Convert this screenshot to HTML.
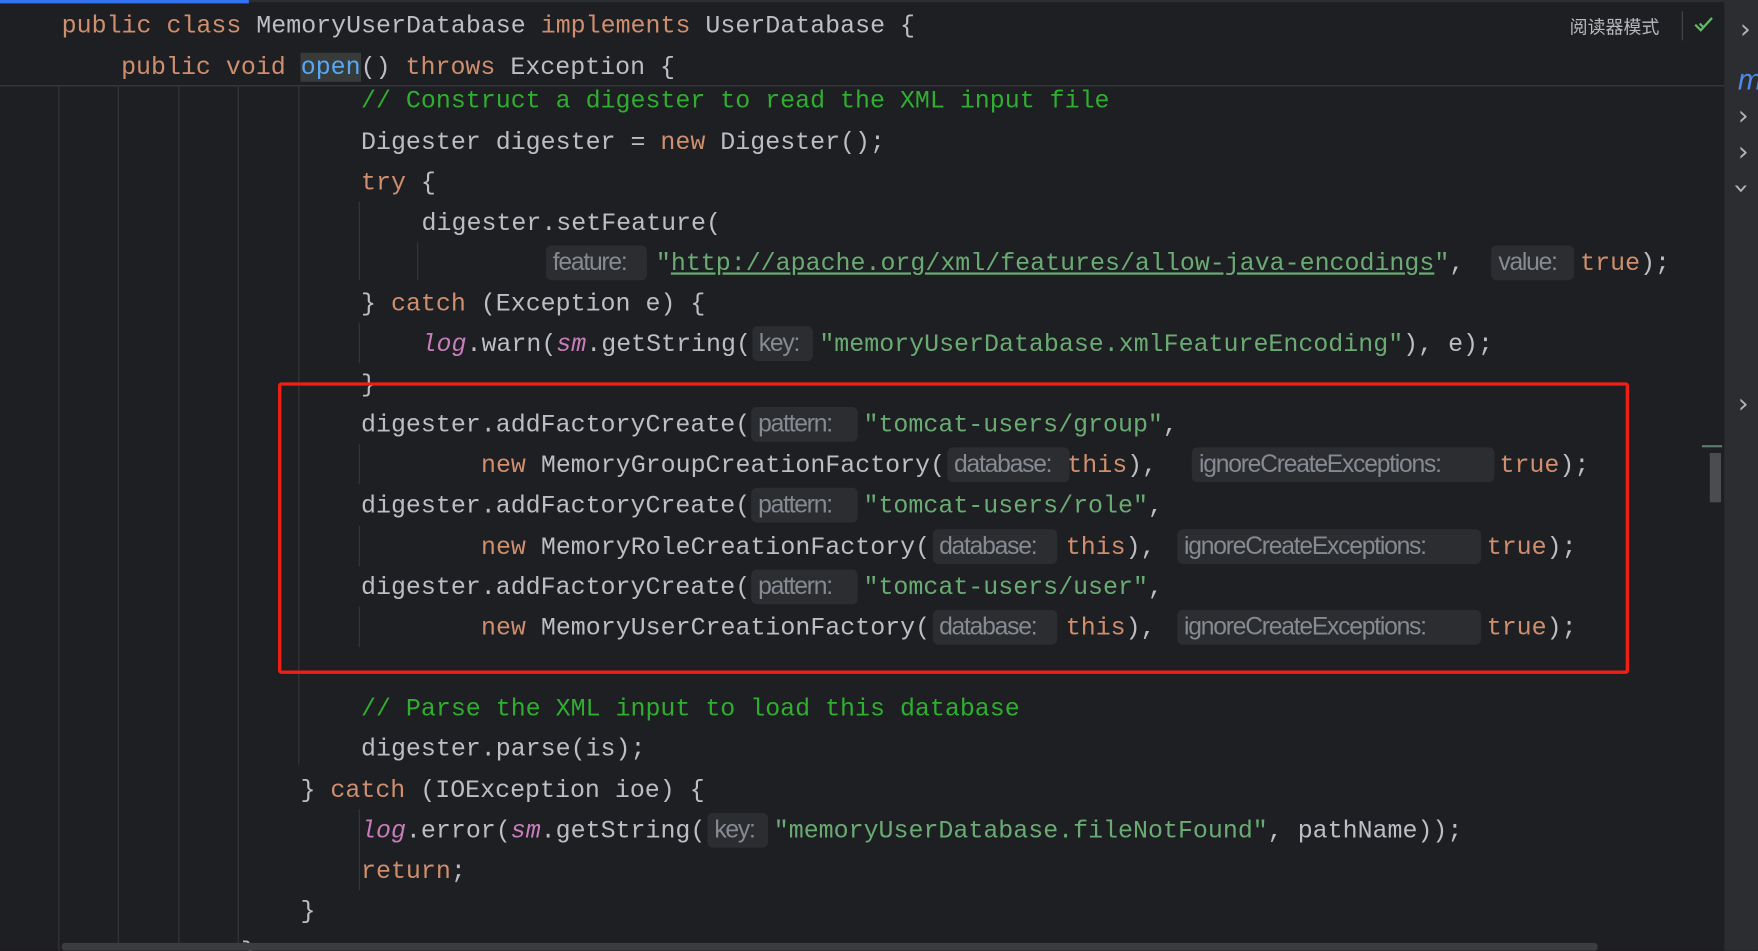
<!DOCTYPE html>
<html><head><meta charset="utf-8"><style>
html,body{margin:0;padding:0;background:#1e1f22;overflow:hidden;width:1758px;height:951px}
#w{position:absolute;left:0;top:0;width:1568px;height:848px;transform:scale(1.12117);transform-origin:0 0;background:#1e1f22;overflow:hidden}
.l{position:absolute;height:36px;line-height:36px;white-space:pre;font-family:"Liberation Mono",monospace;font-size:22.25px;color:#bcbec4}
.k{color:#cf8e6d}.c{color:#2fae2f}.s{color:#6aab73}.i{color:#c77dbb;font-style:italic}
.u{text-decoration:underline;text-decoration-color:#6aab73}
.h{display:inline-block;box-sizing:border-box;height:31px;line-height:30px;vertical-align:top;margin-top:2px;background:#2b2d30;color:#868a91;border-radius:5px;font-family:"Liberation Sans",sans-serif;font-size:22px;letter-spacing:-1.1px;padding-left:6px;overflow:hidden}
.g{position:absolute;width:1px;background:#35373b}
.chev{position:absolute;color:#b0b3b8;font-family:"DejaVu Sans",sans-serif;font-size:24px;line-height:24px}
</style></head><body><div id="w">
<div style="position:absolute;left:0;top:0;width:222px;height:3px;background:#3574f0"></div>
<div style="position:absolute;left:222px;top:0;width:1316px;height:2px;background:#2b2d30"></div>
<div style="position:absolute;left:0;top:76px;width:1538px;height:1px;background:#3c3e42"></div>
<div class="g" style="left:52px;top:77px;height:771px"></div>
<div class="g" style="left:105px;top:77px;height:771px"></div>
<div class="g" style="left:159px;top:77px;height:771px"></div>
<div class="g" style="left:212px;top:77px;height:771px"></div>
<div class="g" style="left:266px;top:77px;height:605px"></div>
<div class="g" style="left:320px;top:180px;height:70px"></div>
<div class="g" style="left:372px;top:216px;height:34px"></div>
<div class="g" style="left:320px;top:288px;height:36px"></div>
<div class="g" style="left:320px;top:396px;height:36px"></div>
<div class="g" style="left:320px;top:469px;height:36px"></div>
<div class="g" style="left:320px;top:541px;height:36px"></div>
<div class="g" style="left:320px;top:722px;height:72px"></div>

<div class="l" style="left:55px;top:5px"><span class="k">public class</span> MemoryUserDatabase <span class="k">implements</span> UserDatabase {</div>
<div class="l" style="left:108px;top:42px"><span class="k">public void</span> <span style="color:#56a8f5;background:#373b39">open</span>() <span class="k">throws</span> Exception {</div>
<div style="position:absolute;left:1400px;top:11px;font-family:'Liberation Sans','Noto Sans CJK SC',sans-serif;font-size:16px;color:#b5b8bd">阅读器模式</div>
<div style="position:absolute;left:1500px;top:10px;width:1px;height:26px;background:#45474c"></div>
<svg style="position:absolute;left:1510px;top:14px" width="20" height="16"><path d="M2 8l5 5 10-11M6 7l4 4" stroke="#5fb865" stroke-width="2" fill="none"/></svg>

<div class="l" style="left:322px;top:72px"><span class="c">// Construct a digester to read the XML input file</span></div>
<div class="l" style="left:322px;top:109px">Digester digester = <span class="k">new</span> Digester();</div>
<div class="l" style="left:322px;top:145px"><span class="k">try</span> {</div>
<div class="l" style="left:376px;top:181px">digester.setFeature(</div>
<div class="l" style="left:487px;top:217px"><span class="h" style="width:90px;margin-right:8px">feature:</span><span class="s">"<span class="u">http://apache.org/xml/features/allow-java-encodings</span>"</span>, <span class="h" style="width:74px;margin-left:11px;margin-right:5px">value:</span><span class="k">true</span>);</div>
<div class="l" style="left:322px;top:253px">} <span class="k">catch</span> (Exception e) {</div>
<div class="l" style="left:376px;top:289px"><span class="i">log</span>.warn(<span class="i">sm</span>.getString(<span class="h" style="width:54px;margin-left:1px;margin-right:6px">key:</span><span class="s">"memoryUserDatabase.xmlFeatureEncoding"</span>), e);</div>
<div class="l" style="left:322px;top:325px">}</div>
<div class="l" style="left:322px;top:361px">digester.addFactoryCreate(<span class="h" style="width:95px;margin-left:1px;margin-right:5px">pattern:</span><span class="s">"tomcat-users/group"</span>,</div>
<div class="l" style="left:429px;top:397px"><span class="k">new</span> MemoryGroupCreationFactory(<span class="h" style="width:109px;margin-left:2px;margin-right:-2px">database:</span><span class="k">this</span>), <span class="h" style="width:270px;margin-left:18px;margin-right:4px">ignoreCreateExceptions:</span><span class="k">true</span>);</div>
<div class="l" style="left:322px;top:433px">digester.addFactoryCreate(<span class="h" style="width:95px;margin-left:1px;margin-right:5px">pattern:</span><span class="s">"tomcat-users/role"</span>,</div>
<div class="l" style="left:429px;top:470px"><span class="k">new</span> MemoryRoleCreationFactory(<span class="h" style="width:111px;margin-left:2px;margin-right:8px">database:</span><span class="k">this</span>), <span class="h" style="width:271px;margin-left:6px;margin-right:5px">ignoreCreateExceptions:</span><span class="k">true</span>);</div>
<div class="l" style="left:322px;top:506px">digester.addFactoryCreate(<span class="h" style="width:95px;margin-left:1px;margin-right:5px">pattern:</span><span class="s">"tomcat-users/user"</span>,</div>
<div class="l" style="left:429px;top:542px"><span class="k">new</span> MemoryUserCreationFactory(<span class="h" style="width:111px;margin-left:2px;margin-right:8px">database:</span><span class="k">this</span>), <span class="h" style="width:271px;margin-left:6px;margin-right:5px">ignoreCreateExceptions:</span><span class="k">true</span>);</div>
<div class="l" style="left:322px;top:614px"><span class="c">// Parse the XML input to load this database</span></div>
<div class="l" style="left:322px;top:650px">digester.parse(is);</div>
<div class="l" style="left:268px;top:687px">} <span class="k">catch</span> (IOException ioe) {</div>
<div class="l" style="left:322px;top:723px"><span class="i">log</span>.error(<span class="i">sm</span>.getString(<span class="h" style="width:54px;margin-left:2px;margin-right:5px">key:</span><span class="s">"memoryUserDatabase.fileNotFound"</span>, pathName));</div>
<div class="l" style="left:322px;top:759px"><span class="k">return</span>;</div>
<div class="l" style="left:268px;top:795px">}</div>
<div class="l" style="left:215px;top:831px">}</div>

<div style="position:absolute;left:248px;top:341px;width:1199px;height:254px;border:3px solid #f01e14;border-radius:3px"></div>

<div style="position:absolute;left:55px;top:841px;width:1370px;height:7px;background:#3a3c40;border-radius:3px"></div>
<div style="position:absolute;left:1518px;top:397px;width:18px;height:2px;background:#5a7a6a"></div>
<div style="position:absolute;left:1525px;top:404px;width:10px;height:44px;background:#4a4c50"></div>
<div style="position:absolute;left:1538px;top:0;width:30px;height:848px;background:#2b2d30"></div>
<div class="chev" style="left:1552px;top:14px">›</div>
<div style="position:absolute;left:1550px;top:56px;color:#4d8ae8;font-style:italic;font-family:'Liberation Sans',sans-serif;font-size:26px">m</div>
<div class="chev" style="left:1550px;top:91px">›</div>
<div class="chev" style="left:1550px;top:123px">›</div>
<div class="chev" style="left:1549px;top:156px;transform:rotate(90deg)">›</div>
<div class="chev" style="left:1550px;top:348px">›</div>
</div></body></html>
